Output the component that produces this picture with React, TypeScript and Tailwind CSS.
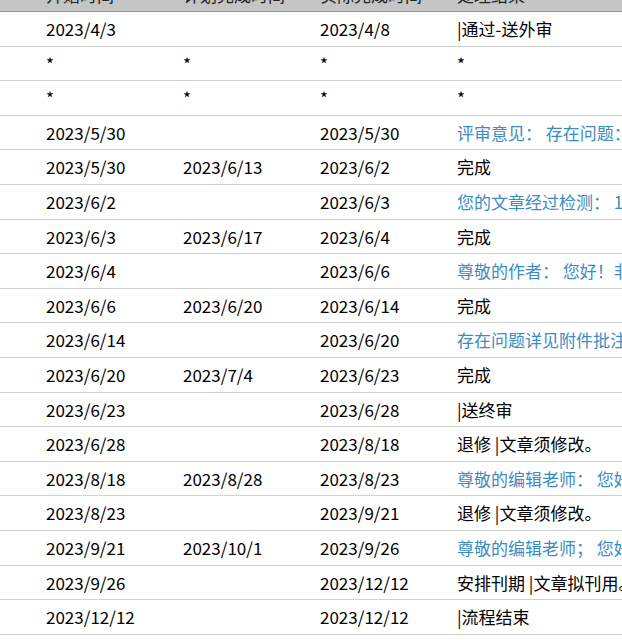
const rows: { start: string; plan: string; actual: string; result: string; link?: boolean }[] = [
  { start: "2023/4/3", plan: "", actual: "2023/4/8", result: "|通过-送外审" },
  { start: "*", plan: "*", actual: "*", result: "*" },
  { start: "*", plan: "*", actual: "*", result: "*" },
  { start: "2023/5/30", plan: "", actual: "2023/5/30", result: "评审意见： 存在问题：1.摘要部分需要进一步精炼", link: true },
  { start: "2023/5/30", plan: "2023/6/13", actual: "2023/6/2", result: "完成" },
  { start: "2023/6/2", plan: "", actual: "2023/6/3", result: "您的文章经过检测： 1.重复率较高，请修改", link: true },
  { start: "2023/6/3", plan: "2023/6/17", actual: "2023/6/4", result: "完成" },
  { start: "2023/6/4", plan: "", actual: "2023/6/6", result: "尊敬的作者： 您好！非常感谢您的投稿", link: true },
  { start: "2023/6/6", plan: "2023/6/20", actual: "2023/6/14", result: "完成" },
  { start: "2023/6/14", plan: "", actual: "2023/6/20", result: "存在问题详见附件批注，请按要求修改", link: true },
  { start: "2023/6/20", plan: "2023/7/4", actual: "2023/6/23", result: "完成" },
  { start: "2023/6/23", plan: "", actual: "2023/6/28", result: "|送终审" },
  { start: "2023/6/28", plan: "", actual: "2023/8/18", result: "退修 |文章须修改。" },
  { start: "2023/8/18", plan: "2023/8/28", actual: "2023/8/23", result: "尊敬的编辑老师： 您好！修改稿已上传", link: true },
  { start: "2023/8/23", plan: "", actual: "2023/9/21", result: "退修 |文章须修改。" },
  { start: "2023/9/21", plan: "2023/10/1", actual: "2023/9/26", result: "尊敬的编辑老师； 您好！修改稿已上传", link: true },
  { start: "2023/9/26", plan: "", actual: "2023/12/12", result: "安排刊期 |文章拟刊用。" },
  { start: "2023/12/12", plan: "", actual: "2023/12/12", result: "|流程结束" },
]

export default function App() {
  return (
    <div
      className="h-[640px] w-[622px] overflow-hidden bg-white text-[17px] text-black"
      style={{ fontFamily: '"Noto Sans CJK SC", "Noto Sans", sans-serif' }}
    >
      <div className="-mt-[22px]">
        {/* header, scrolled mostly out of view */}
        <div className="grid h-[34px] grid-cols-[137px_137px_137px_1fr] items-center border-b border-[#959595] bg-[#c5c5c5] pl-[46px] whitespace-nowrap text-[#222]">
          <div>开始时间</div>
          <div>计划完成时间</div>
          <div>实际完成时间</div>
          <div>处理结果</div>
        </div>
        {rows.map((r, i) => (
          <div
            key={i}
            className="grid h-[34.6px] grid-cols-[137px_137px_137px_1fr] items-center border-b border-[#d2d2d2] pl-[46px] whitespace-nowrap"
          >
            <div>{r.start}</div>
            <div>{r.plan}</div>
            <div>{r.actual}</div>
            <div className={`overflow-hidden ${r.link ? "text-[#3a8dc1]" : ""}`}>{r.result}</div>
          </div>
        ))}
      </div>
    </div>
  )
}
